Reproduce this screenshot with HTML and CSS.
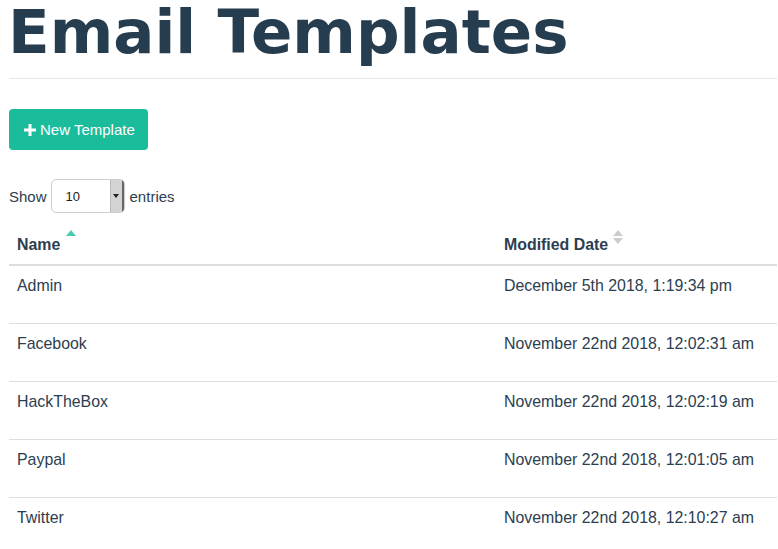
FILE: index.html
```html
<!DOCTYPE html>
<html>
<head>
<meta charset="utf-8">
<link rel="stylesheet" href="styles.css">
</head>
<body>
<div class="page">
  <h1 class="title">Email Templates</h1>
  <hr class="rule">
  <div class="actions">
    <button class="btn-new"><svg class="plus" viewBox="0 0 12 12" width="12" height="12"><path d="M4.5 0h3v4.5H12v3H7.5V12h-3V7.5H0v-3h4.5z" fill="#fff"/></svg>New Template</button>
  </div>
  <div class="length">
    <span>Show</span>
    <div class="select"><span class="sel-val">10</span><span class="sel-btn"><svg viewBox="0 0 6 4" width="6" height="4"><path d="M0 0h6L3 4z" fill="#222"/></svg></span></div>
    <span>entries</span>
  </div>
  <table class="grid">
    <thead>
      <tr>
        <th class="col-name"><span class="th-label">Name</span><span class="sort-asc"></span></th>
        <th class="col-date"><span class="th-label">Modified Date</span><span class="sort-both"><span class="up"></span><span class="down"></span></span></th>
      </tr>
    </thead>
    <tbody>
      <tr><td>Admin</td><td>December 5th 2018, 1:19:34 pm</td></tr>
      <tr><td>Facebook</td><td>November 22nd 2018, 12:02:31 am</td></tr>
      <tr><td>HackTheBox</td><td>November 22nd 2018, 12:02:19 am</td></tr>
      <tr><td>Paypal</td><td>November 22nd 2018, 12:01:05 am</td></tr>
      <tr><td>Twitter</td><td>November 22nd 2018, 12:10:27 am</td></tr>
    </tbody>
  </table>
</div>
</body>
</html>
```
FILE: styles.css
```css
html, body { margin: 0; padding: 0; background: #fff; }
body { font-family: "Liberation Sans", Arial, sans-serif; font-size: 15px; color: #2c3e50; overflow: hidden; }
.page { margin: 0 1px 0 9px; padding-top: 1px; }
.title {
  font-family: "DejaVu Sans", sans-serif;
  font-weight: bold;
  font-size: 61px;
  line-height: 70px;
  margin: -4px 0 0 -1px;
  color: #263d4f;
  white-space: nowrap;
}
.rule { border: 0; border-top: 1px solid #e7e7e7; margin: 11px 0 30px 0; height: 0; }
.actions { display: flex; }
.btn-new {
  display: flex; align-items: center; gap: 4px;
  height: 41px; width: 139px; padding: 0 0 0 15px;
  background: #1abc9c; color: #fff; border: 0; border-radius: 4px;
  font-family: "Liberation Sans", Arial, sans-serif; font-size: 15px;
}
.plus { display: block; }
.length { display: flex; align-items: center; margin-top: 29px; height: 34px; }
.select {
  display: flex; width: 74px; height: 34px; box-sizing: border-box;
  border: 1px solid #ccc; border-radius: 5px; overflow: hidden; margin: 0 5px 0 4px;
}
.sel-val { flex: 1; display: flex; align-items: center; padding-left: 14px; font-size: 13px; color: #222; }
.sel-btn {
  width: 11px; display: flex; align-items: center; justify-content: center;
  background: #d4d4d4; border-left: 1px solid #bbb; border-right: 2px solid #666;
}
.grid { border-collapse: collapse; width: 100%; margin-top: 13px; font-size: 15.9px; }
.grid th {
  text-align: left; font-weight: bold; padding: 8px;
  line-height: 22px; border-bottom: 2px solid #ddd; position: relative; vertical-align: bottom;
}
.grid td {
  padding: 9px 8px 26px 8px; line-height: 22px; border-top: 1px solid #ddd; vertical-align: top;
}
.grid tbody tr:first-child td { border-top: 0; }
.col-name { width: 471px; }
.th-label { display: inline-block; }
.sort-asc {
  position: absolute; left: 57px; top: 4px;
  width: 0; height: 0; border-left: 5px solid transparent; border-right: 5px solid transparent;
  border-bottom: 6px solid #48c9b0;
}
.sort-both { position: absolute; left: 117px; top: 4px; display: flex; flex-direction: column; gap: 2px; }
.sort-both .up { width: 0; height: 0; border-left: 5px solid transparent; border-right: 5px solid transparent; border-bottom: 6px solid #ccc; }
.sort-both .down { width: 0; height: 0; border-left: 5px solid transparent; border-right: 5px solid transparent; border-top: 6px solid #ccc; }
```
